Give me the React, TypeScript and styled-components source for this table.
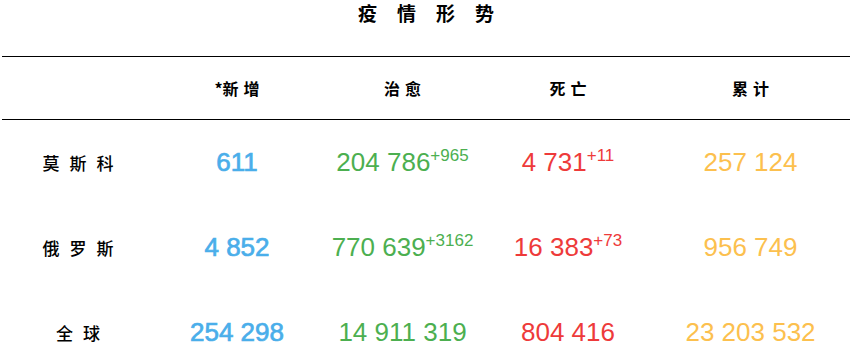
import React from "react";
import styled, { createGlobalStyle } from "styled-components";

const Global = createGlobalStyle`
  html, body { margin: 0; padding: 0; background: #fff; }
  body { font-family: "Noto Sans CJK SC", "Liberation Sans", sans-serif; }
`;

const Page = styled.div`
  width: 848px;
  margin-left: 2px;
`;

const Title = styled.h1`
  margin: 0 0 30px;
  height: 26px;
  line-height: 26px;
  text-align: center;
  font-size: 19px;
  font-weight: 700;
  letter-spacing: 20px;
  padding-left: 20px;
  color: #000;
`;

const Table = styled.div`
  display: grid;
  grid-template-columns: 152px 166px 165px 166px 199px;
  border-top: 1px solid #000;
`;

const HeadCell = styled.div`
  height: 62px;
  display: flex;
  align-items: center;
  justify-content: center;
  font-size: 16px;
  font-weight: 700;
  letter-spacing: 5px;
  padding-left: 5px;
  color: #000;
  border-bottom: 1px solid #000;
`;

const Star = styled.span`
  letter-spacing: 0;
`;

const RowLabel = styled.div`
  height: 85px;
  display: flex;
  align-items: center;
  justify-content: center;
  font-size: 17px;
  font-weight: 500;
  letter-spacing: 10px;
  padding-left: 10px;
  color: #000;
`;

const Num = styled.div<{ $color: string; $strong?: boolean }>`
  height: 85px;
  line-height: 85px;
  text-align: center;
  font-family: "Liberation Sans", Arial, sans-serif;
  font-size: 26px;
  font-weight: 400;
  color: ${(p) => p.$color};
  white-space: nowrap;
  ${(p) => (p.$strong ? "-webkit-text-stroke: 0.7px currentColor;" : "")}
`;

const Sup = styled.span`
  font-size: 17px;
  vertical-align: 10px;
  line-height: 0;
`;

const BLUE = "#4aaeea";
const GREEN = "#4caf50";
const RED = "#ee3a3a";
const YELLOW = "#fcc04e";

type Row = {
  name: string;
  added: string;
  cured: string;
  curedInc?: string;
  dead: string;
  deadInc?: string;
  total: string;
};

const rows: Row[] = [
  { name: "莫斯科", added: "611", cured: "204 786", curedInc: "+965", dead: "4 731", deadInc: "+11", total: "257 124" },
  { name: "俄罗斯", added: "4 852", cured: "770 639", curedInc: "+3162", dead: "16 383", deadInc: "+73", total: "956 749" },
  { name: "全球", added: "254 298", cured: "14 911 319", dead: "804 416", total: "23 203 532" },
];

export default function App() {
  return (
    <Page>
      <Global />
      <Title>疫情形势</Title>
      <Table>
        <HeadCell />
        <HeadCell>
          <Star>*</Star>新增
        </HeadCell>
        <HeadCell>治愈</HeadCell>
        <HeadCell>死亡</HeadCell>
        <HeadCell>累计</HeadCell>
        {rows.map((r) => (
          <React.Fragment key={r.name}>
            <RowLabel>{r.name}</RowLabel>
            <Num $color={BLUE} $strong>{r.added}</Num>
            <Num $color={GREEN}>
              {r.cured}
              {r.curedInc && <Sup>{r.curedInc}</Sup>}
            </Num>
            <Num $color={RED}>
              {r.dead}
              {r.deadInc && <Sup>{r.deadInc}</Sup>}
            </Num>
            <Num $color={YELLOW}>{r.total}</Num>
          </React.Fragment>
        ))}
      </Table>
    </Page>
  );
}
